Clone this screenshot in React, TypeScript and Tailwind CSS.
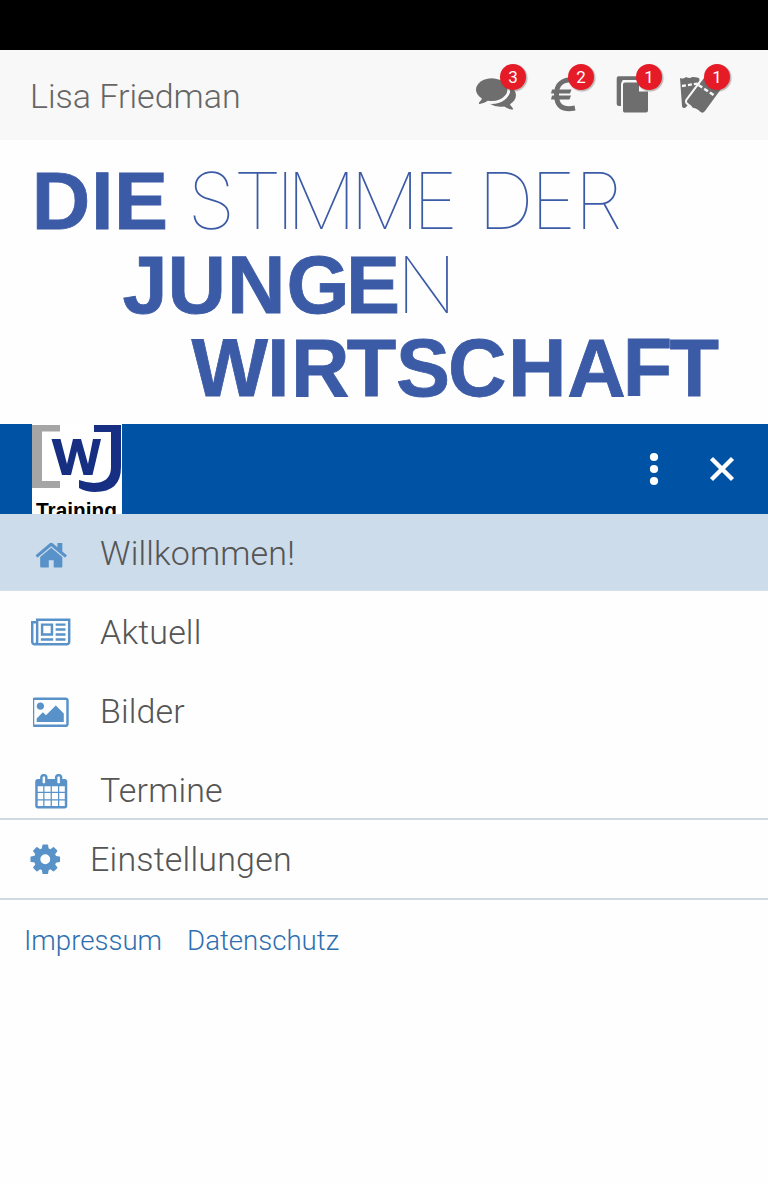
import type { ReactNode } from "react";

const ICONS = {
  home: {
    width: 1792,
    d: "M1472 992v480q0 26-19 45t-45 19h-384v-384h-256v384h-384q-26 0-45-19t-19-45v-480q0-1 .5-3t.5-3l575-474 575 474q1 2 1 6zm223-69l-62 74q-8 9-21 11h-3q-13 0-21-7l-692-577-692 577q-12 8-24 7-13-2-21-11l-62-74q-8-10-7-23.5t11-21.5l719-599q32-26 76-26t76 26l244 204v-195q0-14 9-23t23-9h192q14 0 23 9t9 23v408l219 182q10 8 11 21.5t-7 23.5z",
  },
  news: {
    width: 2048,
    d: "M1024 512h-384v384h384v-384zm128 640v128h-640v-128h640zm0-768v640h-640v-640h640zm640 768v128h-512v-128h512zm0-256v128h-512v-128h512zm0-256v128h-512v-128h512zm0-256v128h-512v-128h512zm-1536 960v-960h-128v960q0 26 19 45t45 19 45-19 19-45zm1664 0v-1088h-1536v1088q0 33-11 64h1483q26 0 45-19t19-45zm128-1216v1216q0 80-56 136t-136 56h-1664q-80 0-136-56t-56-136v-1088h256v-128h1792z",
  },
  picture: {
    width: 1920,
    d: "M576 576q0 80-56 136t-136 56-136-56-56-136 56-136 136-56 136 56 56 136zm1024 384v448h-1408v-192l320-320 160 160 512-512zm96-704h-1600q-13 0-22.5 9.5t-9.5 22.5v1216q0 13 9.5 22.5t22.5 9.5h1600q13 0 22.5-9.5t9.5-22.5v-1216q0-13-9.5-22.5t-22.5-9.5zm160 32v1216q0 66-47 113t-113 47h-1600q-66 0-113-47t-47-113v-1216q0-66 47-113t113-47h1600q66 0 113 47t47 113z",
  },
  calendar: {
    width: 1792,
    d: "M192 1664h288v-288h-288v288zm352 0h320v-288h-320v288zm-352-352h288v-320h-288v320zm352 0h320v-320h-320v320zm-352-384h288v-288h-288v288zm736 736h320v-288h-320v288zm-384-736h320v-288h-320v288zm768 736h288v-288h-288v288zm-384-352h320v-320h-320v320zm-352-864v-288q0-13-9.5-22.5t-22.5-9.5h-64q-13 0-22.5 9.5t-9.5 22.5v288q0 13 9.5 22.5t22.5 9.5h64q13 0 22.5-9.5t9.5-22.5zm736 864h288v-320h-288v320zm-384-384h320v-288h-320v288zm384 0h288v-288h-288v288zm32-480v-288q0-13-9.5-22.5t-22.5-9.5h-64q-13 0-22.5 9.5t-9.5 22.5v288q0 13 9.5 22.5t22.5 9.5h64q13 0 22.5-9.5t9.5-22.5zm384-64v1280q0 52-38 90t-90 38h-1408q-52 0-90-38t-38-90v-1280q0-52 38-90t90-38h128v-96q0-66 47-113t113-47h64q66 0 113 47t47 113v96h384v-96q0-66 47-113t113-47h64q66 0 113 47t47 113v96h128q52 0 90 38t38 90z",
  },
  cog: {
    width: 1792,
    d: "M1152 896q0-106-75-181t-181-75-181 75-75 181 75 181 181 75 181-75 75-181zm512-109v222q0 12-8 23t-20 13l-185 28q-19 54-39 91 35 50 107 138 10 12 10 25t-9 23q-27 37-99 108t-94 71q-12 0-26-9l-138-108q-44 23-91 38-16 136-29 186-7 28-36 28h-222q-14 0-24.5-8.5t-11.5-21.5l-28-184q-49-16-90-37l-141 107q-10 9-25 9-14 0-25-11-126-114-165-168-7-10-7-23 0-12 8-23 15-21 51-66.5t54-70.5q-27-50-41-99l-183-27q-13-2-21-12.5t-8-23.5v-222q0-12 8-23t19-13l186-28q14-46 39-92-40-57-107-138-10-12-10-24 0-10 9-23 26-36 98.5-107.5t94.5-71.5q13 0 26 10l138 107q44-23 91-38 16-136 29-186 7-28 36-28h222q14 0 24.5 8.5t11.5 21.5l28 184q49 16 90 37l142-107q9-9 24-9 13 0 25 10 129 119 165 170 7 8 7 22 0 12-8 23-15 21-51 66.5t-54 70.5q26 50 41 98l183 28q13 2 21 12.5t8 23.5z",
  },
};

function Icon({ name }: { name: keyof typeof ICONS }) {
  const { width, d } = ICONS[name];
  return (
    <svg className="h-[34.500px] shrink-0" viewBox={`0 0 ${width} 1792`} fill="#5892c8">
      <path d={d} />
    </svg>
  );
}

function Notice({ count, children }: { count: number; children: ReactNode }) {
  return (
    <button className="relative h-[60px] w-[68px]">
      <svg className="h-[60px] w-[68px]" viewBox="0 0 68 60" fill="#6e6e6e">
        {children}
      </svg>
      <span className="absolute top-[4px] left-[30px] flex h-[26px] w-[26px] items-center justify-center rounded-full bg-[#e51c28] pt-px text-[17px] leading-none font-normal text-white shadow-[1px_1px_1px_0.5px_rgba(100,80,80,0.4)]">
        {count}
      </span>
    </button>
  );
}

function Header() {
  return (
    <header className="flex h-[90px] items-start justify-between bg-[#f8f8f8] pr-[26px] pl-[30px]">
      <h1 className="pt-[26px] text-[34px] leading-[40px] font-light text-[#666]">Lisa Friedman</h1>
      <div className="flex pt-[10px]">
        <Notice count={3}>
          <g transform="translate(6 12.5) scale(.0223)">
            <path d="M1408 768q0 139-94 257t-256.5 186.5-353.5 68.5q-86 0-176-16-124 88-278 128-36 9-86 16h-3q-11 0-20.5-8t-11.5-21q-1-3-1-6.5t.5-6.5 2-6l2.5-5 3.5-5.5 4-5 4.5-5 4-4.5q5-6 23-25t26-29.5 22.5-29 25-38.5 20.5-44q-124-72-195-177t-71-224q0-139 94-257t256.5-186.5 353.5-68.5 353.5 68.5 256.5 186.5 94 257zm384 256q0 120-71 224.5t-195 176.5q10 24 20.5 44t25 38.5 22.5 29 26 29.5 23 25q1 1 4 4.5t4.5 5 4 5 3.5 5.5l2.5 5 2 6 .5 6.5-1 6.5q-3 14-13 22t-22 7q-50-7-86-16-154-40-278-128-90 16-176 16-271 0-472-132 58 4 88 4 161 0 309-45t264-129q125-92 192-212t67-254q0-77-23-152 129 71 204 178t75 230z" />
          </g>
        </Notice>
        <Notice count={2}>
          <path
            d="M36 19.500C24 19.500 18.500 23.500 18.500 34.500C18.500 46 24 50.500 37 48"
            fill="none"
            stroke="#6e6e6e"
            strokeWidth="5"
          />
          <path d="M14 29.500H33.500L32 33.500H13ZM14 35.500H33L31.500 39.500H13Z" />
        </Notice>
        <Notice count={1}>
          <path d="M12.500 16.300H33V20H16.500V46H13Q10.700 46 10.700 44V18.300Q10.700 16.300 12.500 16.300Z" />
          <path
            d="M19 22.500H33V31.500H42V50.500Q42 52.500 40 52.500H18.500Q17 52.500 17 50.500V24.500Q17 22.500 19 22.500Z"
            stroke="#f8f8f8"
            strokeWidth="4"
            paintOrder="stroke"
          />
        </Notice>
        <Notice count={1}>
          <path d="M6 18Q9 19.500 12 17Q16 19 18 17Q22 17 25 18L27 26L14 45L11 48Q8 48 8 46Z" />
          <path d="M8 26L24 23.500" stroke="#f8f8f8" strokeWidth="2.300" strokeDasharray="4 2" />
          <path
            d="M30 18L47 29L31 51Q28.500 54 26 51.500Q22 47.500 19 48Q18 46 14.500 43.500Q12 42 13.500 40Z"
            stroke="#f8f8f8"
            strokeWidth="4"
            paintOrder="stroke"
          />
          <path d="M24.500 25L41 36" stroke="#f8f8f8" strokeWidth="2.500" strokeDasharray="4.500 2.300" />
        </Notice>
      </div>
    </header>
  );
}

function Slogan() {
  return (
    <svg className="block h-[284px] w-full bg-[#fefefe]" viewBox="0 140 768 284" fill="#3c5ba6">
      <g className="font-['Liberation_Sans',sans-serif] text-[81px] font-bold" stroke="#3c5ba6" strokeWidth=".8">
        <text x="31.700 91 114" y="228.700">DIE</text>
        <text x="122.500 167.500 227 286.500 346" y="312.700">JUNGE</text>
        <text x="191.500 267 291 346.800 396 448 508 567.300 622.800 669.500" y="396.200">WIRTSCHAFT</text>
      </g>
      <g className="font-['Inter',sans-serif] text-[78px] font-thin">
        <text x="187.500 233.500 275.500 286.500 350 412.500" y="229">STIMME</text>
        <text x="478 530.500 574.500" y="229">DER</text>
        <text x="396.500" y="313">N</text>
      </g>
    </svg>
  );
}

function Brand() {
  return (
    <svg className="h-[90px] w-[90px] bg-white" viewBox="0 0 90 90">
      <path d="M0 1H28V7.500H10V57H28V64H0Z" fill="#a5a5a5" />
      <path d="M62 1H89V43Q89 68 63 68Q54 68 47 64V56Q58 60 67 58.500Q79 56 79 43V8H62Z" fill="#172f82" />
      <path d="M19.500 15H28.500L35 40L41 15H49L56 40L61 15H69L60.500 51H51.500L45 27L39 51H30Z" fill="#172f82" />
      <text x="4" y="93.500" textLength="81" lengthAdjust="spacingAndGlyphs" className="font-['Liberation_Sans',sans-serif] text-[22px] font-bold">
        Training
      </text>
    </svg>
  );
}

function MenuRow({ icon, label, active = false }: { icon: keyof typeof ICONS; label: string; active?: boolean }) {
  return (
    <li className={active ? "mb-[2px] flex h-[77px] shrink-0 items-center border-b border-[#d4e1ec] bg-[#ccdcea] pt-[2px]" : "mb-[2px] flex h-[77px] shrink-0 items-center"}>
      <span className="flex w-[100px] justify-start pl-[32px]">
        <span className="flex w-[38px] justify-center pt-[4px]">
          <Icon name={icon} />
        </span>
      </span>
      <span className="text-[34px] leading-[40px] tracking-[0.15px]">{label}</span>
    </li>
  );
}

export default function App() {
  return (
    <div className="flex h-[1184px] w-[768px] flex-col overflow-hidden bg-[#fefefe] font-['Roboto',sans-serif] font-light text-[#555]">
      <div className="h-[50px] shrink-0 bg-black" />
      <Header />
      <Slogan />
      <div className="flex h-[90px] shrink-0 items-center bg-[#0053a4] pr-[32px] pl-[32px]">
        <Brand />
        <button className="ml-auto" aria-label="Mehr">
          <svg className="h-[34px] w-[10px]" viewBox="0 0 10 34" fill="white">
            <circle cx="5" cy="5" r="4.100" />
            <circle cx="5" cy="17" r="4.100" />
            <circle cx="5" cy="29" r="4.100" />
          </svg>
        </button>
        <button className="ml-[49px]" aria-label="Schließen">
          <svg className="h-[28px] w-[28px]" viewBox="0 0 28 28">
            <path d="M3.500 3.500L24.500 24.500M24.500 3.500L3.500 24.500" stroke="white" strokeWidth="4.400" />
          </svg>
        </button>
      </div>
      <nav className="flex h-[304px] shrink-0 flex-col overflow-hidden">
        <ul>
          <MenuRow icon="home" label="Willkommen!" active />
          <MenuRow icon="news" label="Aktuell" />
          <MenuRow icon="picture" label="Bilder" />
          <MenuRow icon="calendar" label="Termine" />
        </ul>
      </nav>
      <div className="flex h-[82px] shrink-0 items-center border-y-2 border-[#d0dae3] pl-[28px]">
        <span className="flex w-[35px] pt-px">
          <Icon name="cog" />
        </span>
        <span className="ml-[27px] text-[34px] leading-[40px] tracking-[0.2px]">Einstellungen</span>
      </div>
      <footer className="flex gap-[25px] pt-[24px] pl-[24px] text-[27.600px] leading-[33px] text-[#2d6fb0]">
        <a>Impressum</a>
        <a>Datenschutz</a>
      </footer>
    </div>
  );
}
